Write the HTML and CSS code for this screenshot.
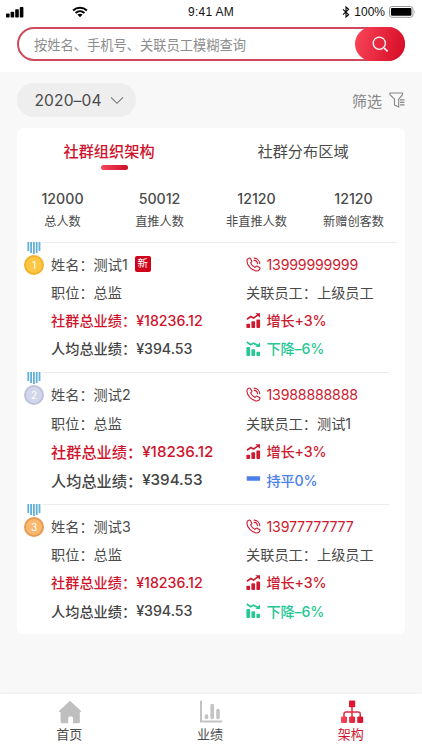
FILE: index.html
```
<!DOCTYPE html>
<html lang="zh-CN">
<head>
    <meta charset="UTF-8">
    <meta name="viewport" content="width=device-width, initial-scale=1.0">
    <title>社群组织架构</title>
    <link rel="stylesheet" href="styles.css">
</head>
<body>
    <!-- shared icons -->
    <svg class="sprite" width="0" height="0">
        <defs>
            <linearGradient id="redGrad" x1="0" y1="0" x2="1" y2="0">
                <stop offset="0" stop-color="#f5475c"/>
                <stop offset="1" stop-color="#d5112b"/>
            </linearGradient>
        </defs>
        <symbol id="phone" viewBox="0 0 15 15">
            <path d="M3.2 1.1 C2 1.5 .9 2.6 .9 4 C1.2 8.9 5.8 13.6 10.8 14 C12.3 14 13.4 13 13.9 11.8 C14.1 11.3 13.9 10.8 13.5 10.6 L11 9.2 C10.5 9 10.1 9.1 9.8 9.5 L9.1 10.4 C7.2 9.6 5.4 7.8 4.6 5.9 L5.4 5.2 C5.8 4.9 5.9 4.4 5.7 4 L4.4 1.6 C4.1 1.1 3.7 .9 3.2 1.1 Z" fill="none" stroke="currentColor" stroke-width="1.1"/>
            <path d="M8.1 1.1 C11.2 1.2 13.6 3.6 13.8 6.8 M8.1 3.4 C10 3.5 11.4 4.9 11.5 6.8" fill="none" stroke="currentColor" stroke-width="1.1" stroke-linecap="round"/>
        </symbol>
        <symbol id="up" viewBox="0 0 15 15">
            <path d="M1 6.2 L4.8 3.6 L7.6 5.1 L12.3 1.6" fill="none" stroke="currentColor" stroke-width="1.7"/>
            <path d="M9.4 .2 H14 V4.8 Z" fill="currentColor"/>
            <rect x=".4" y="10.7" width="3.7" height="4.2" rx=".9" fill="currentColor"/>
            <rect x="5.4" y="8.3" width="3.7" height="6.6" rx=".9" fill="currentColor"/>
            <rect x="10.4" y="6.5" width="3.7" height="8.4" rx=".9" fill="currentColor"/>
        </symbol>
        <symbol id="down" viewBox="0 0 15 15">
            <path d="M.8 1 L4.6 3.8 L7.5 2.3 L12.1 4.6" fill="none" stroke="currentColor" stroke-width="1.7"/>
            <path d="M14 1.6 V6 H9.5 Z" fill="currentColor"/>
            <rect x=".4" y="6" width="3.7" height="8.9" rx=".9" fill="currentColor"/>
            <rect x="5.4" y="8.2" width="3.7" height="6.7" rx=".9" fill="currentColor"/>
            <rect x="10.4" y="10.8" width="3.7" height="4.1" rx=".9" fill="currentColor"/>
        </symbol>
        <symbol id="flat" viewBox="0 0 15 15">
            <rect x=".7" y="4.2" width="13.4" height="4.5" rx=".4" fill="currentColor"/>
        </symbol>
        <symbol id="ribbon" viewBox="0 0 14 13">
            <path d="M1.3 0 V9 M4.1 0 V11 M6.9 0 V12 M9.7 0 V11 M12.5 0 V9" stroke="#62b0da" stroke-width="1.8"/>
        </symbol>
    </svg>

    <header class="header">
        <div class="status-bar">
            <div class="status-left">
                <svg width="18" height="12" viewBox="0 0 18 12">
                    <rect x="0" y="7.5" width="3.6" height="4" rx=".8"/>
                    <rect x="4.6" y="5.7" width="3.6" height="5.8" rx=".8"/>
                    <rect x="9.2" y="3.3" width="3.6" height="8.2" rx=".8"/>
                    <rect x="13.8" y="1" width="3.6" height="10.5" rx=".8"/>
                </svg>
                <svg class="wifi" width="16" height="12" viewBox="0 0 16 12">
                    <path d="M1.1 4.4 C5 .8 11 .8 14.9 4.4 M3.6 7 C6.2 4.7 9.8 4.7 12.4 7" fill="none" stroke="#000" stroke-width="2"/>
                    <path d="M5.4 8.6 Q8 6.7 10.6 8.6 L8 11.3 Z"/>
                </svg>
            </div>
            <span class="time">9:41 AM</span>
            <div class="status-right">
                <svg width="8" height="12" viewBox="0 0 8 12">
                    <path d="M1 3.3 L6.6 8.7 L4 11 V1 L6.6 3.3 L1 8.7" fill="none" stroke="#000" stroke-width="1.1"/>
                </svg>
                <span>100%</span>
                <svg width="27" height="12" viewBox="0 0 27 12">
                    <rect x=".5" y=".5" width="23.4" height="10.8" rx="2.4" fill="#fff" stroke="#999"/>
                    <rect x="2" y="2" width="20.4" height="7.8" rx="1"/>
                    <path d="M25 4 Q26.6 5.9 25 7.8 Z" fill="#999"/>
                </svg>
            </div>
        </div>
        <div class="search">
            <span class="placeholder">按姓名、手机号、关联员工模糊查询</span>
            <button class="search-btn">
                <svg width="17" height="17" viewBox="0 0 17 17">
                    <circle cx="7.3" cy="7.2" r="6.1" fill="none" stroke="#fff" stroke-width="1.3"/>
                    <path d="M12.2 12.2 L15.6 15.4" stroke="#fff" stroke-width="1.6"/>
                </svg>
            </button>
        </div>
    </header>

    <div class="toolbar">
        <div class="month">
            <span>2020–04</span>
            <svg width="14" height="9" viewBox="0 0 14 9"><path d="M1 1.3 L7 7.3 L13 1.3" fill="none" stroke="#777" stroke-width="1.1"/></svg>
        </div>
        <div class="filter">
            <span>筛选</span>
            <svg width="16" height="16" viewBox="0 0 16 16">
                <path d="M.9 1 H13.6 V2.6 L9.7 7.2 V15 L5.5 13 V7.2 L.9 2.6 Z" fill="none" stroke="#858585" stroke-width="1.1" stroke-linejoin="round"/>
                <path d="M11 7.9 H15.5 M11 10.4 H15.5 M11 12.9 H15.5" stroke="#858585" stroke-width="1.1"/>
            </svg>
        </div>
    </div>

    <main class="card">
        <div class="tabs">
            <div class="tab active">社群组织架构</div>
            <div class="tab">社群分布区域</div>
        </div>
        <div class="stats">
            <div class="stat"><strong>12000</strong><span>总人数</span></div>
            <div class="stat"><strong>50012</strong><span>直推人数</span></div>
            <div class="stat"><strong>12120</strong><span>非直推人数</span></div>
            <div class="stat"><strong>12120</strong><span>新赠创客数</span></div>
        </div>

        <section class="member first">
            <div class="medal gold">
                <svg width="14" height="13"><use href="#ribbon"/></svg>
                <span>1</span>
            </div>
            <div class="col">
                <p>姓名：测试1<span class="new">新</span></p>
                <p>职位：总监</p>
                <p class="total">社群总业绩：<b>¥18236.12</b></p>
                <p class="average">人均总业绩：<b>¥394.53</b></p>
            </div>
            <div class="col">
                <p class="phone"><svg width="15" height="15"><use href="#phone"/></svg>13999999999</p>
                <p>关联员工：上级员工</p>
                <p class="up"><svg width="15" height="15"><use href="#up"/></svg>增长+3%</p>
                <p class="down"><svg width="15" height="15"><use href="#down"/></svg>下降–6%</p>
            </div>
        </section>

        <section class="member second">
            <div class="medal silver">
                <svg width="14" height="13"><use href="#ribbon"/></svg>
                <span>2</span>
            </div>
            <div class="col">
                <p>姓名：测试2</p>
                <p>职位：总监</p>
                <p class="total">社群总业绩：<b>¥18236.12</b></p>
                <p class="average">人均总业绩：<b>¥394.53</b></p>
            </div>
            <div class="col">
                <p class="phone"><svg width="15" height="15"><use href="#phone"/></svg>13988888888</p>
                <p>关联员工：测试1</p>
                <p class="up"><svg width="15" height="15"><use href="#up"/></svg>增长+3%</p>
                <p class="flat"><svg width="15" height="15"><use href="#flat"/></svg>持平0%</p>
            </div>
        </section>

        <section class="member third">
            <div class="medal bronze">
                <svg width="14" height="13"><use href="#ribbon"/></svg>
                <span>3</span>
            </div>
            <div class="col">
                <p>姓名：测试3</p>
                <p>职位：总监</p>
                <p class="total">社群总业绩：<b>¥18236.12</b></p>
                <p class="average">人均总业绩：<b>¥394.53</b></p>
            </div>
            <div class="col">
                <p class="phone"><svg width="15" height="15"><use href="#phone"/></svg>13977777777</p>
                <p>关联员工：上级员工</p>
                <p class="up"><svg width="15" height="15"><use href="#up"/></svg>增长+3%</p>
                <p class="down"><svg width="15" height="15"><use href="#down"/></svg>下降–6%</p>
            </div>
        </section>
    </main>

    <nav class="bottom-nav">
        <a class="nav-item">
            <svg width="24" height="24" viewBox="0 0 24 24">
                <path d="M12 .8 L23 11 Q23.4 12 22.4 12 H21.8 V22 Q21.8 23.2 20.6 23.2 H15 V18 Q15 16.4 13.7 16.4 H11.5 Q10.2 16.4 10.2 18 V23.2 H4 Q2.6 23.2 2.6 22 V12 H1.6 Q.6 12 1 11 Z" fill="#bfbfbf"/>
            </svg>
            <span>首页</span>
        </a>
        <a class="nav-item">
            <svg width="24" height="24" viewBox="0 0 24 24">
                <path d="M2 1.5 V21.5 H22.4" fill="none" stroke="#c3c3c3" stroke-width="2" stroke-linecap="round"/>
                <path d="M7.5 16 V17.5 M13.2 5.5 V17.5 M19 10.5 V17.5" stroke="#c3c3c3" stroke-width="3.6" stroke-linecap="round"/>
            </svg>
            <span>业绩</span>
        </a>
        <a class="nav-item active">
            <svg width="24" height="24" viewBox="0 0 24 24">
                <rect x="9" y=".6" width="6.2" height="6.6" rx=".8" fill="#dc1733"/>
                <path d="M12 7 V17 M4 17 V14 Q4 12 6 12 H18.2 Q20.2 12 20.2 14 V17" fill="none" stroke="#dd2940" stroke-width="1.5"/>
                <path d="M1.8 16.5 H6.2 L7 17.3 V22.2 L6.2 23 H1.8 L1 22.2 V17.3 Z M9.9 16.5 H14.3 L15.1 17.3 V22.2 L14.3 23 H9.9 L9.1 22.2 V17.3 Z M18 16.5 H22.4 L23.2 17.3 V22.2 L22.4 23 H18 L17.2 22.2 V17.3 Z" fill="url(#redGrad)"/>
            </svg>
            <span>架构</span>
        </a>
    </nav>
</body>
</html>
```
FILE: styles.css
```
* {
    box-sizing: border-box;
}
body {
    font-family: Inter, "Noto Sans CJK SC", sans-serif;
    font-size: 14.2px;
    color: #4a4a4a;
    background: #f8f8f8;
    margin: 0;
    height: 750px;
    display: flex;
    flex-direction: column;
    overflow: hidden;
}
p {
    margin: 0;
}
svg {
    display: block;
    flex: none;
}
/* kept rendered so the gradient inside still works */
.sprite {
    position: absolute;
}
.header {
    background: #fff;
    height: 72px;
    flex: none;
}
.status-bar {
    display: grid;
    grid-template-columns: 1fr auto 1fr;
    align-items: center;
    height: 27px;
    padding: 0 6px 4px 6px;
    font-family: "Liberation Sans", Arial, sans-serif;
    font-size: 12px;
    color: #111;
}
.status-left {
    display: flex;
    align-items: center;
    gap: 48px;
}
.time {
    letter-spacing: 0.3px;
}
.status-right {
    display: flex;
    align-items: center;
    justify-content: flex-end;
    gap: 4px;
}
.search {
    display: flex;
    align-items: center;
    justify-content: space-between;
    width: 388px;
    height: 34px;
    margin-left: 17px;
    padding-left: 15px;
    border: 2px solid #cf4a5d;
    border-radius: 17px;
}
.placeholder {
    font-size: 13.25px;
    color: #8c8c8c;
}
.search-btn {
    display: flex;
    align-items: center;
    justify-content: center;
    width: 50px;
    height: 34px;
    margin-right: -2px;
    padding: 0;
    border: 0;
    border-radius: 17px;
    background: linear-gradient(105deg, #fa4659, #d40a24);
}
.toolbar {
    display: flex;
    align-items: center;
    justify-content: space-between;
    height: 56px;
    padding: 0 17px;
    flex: none;
}
.month {
    display: flex;
    align-items: center;
    gap: 8px;
    width: 119px;
    height: 34px;
    padding-left: 17.5px;
    border-radius: 17px;
    background: #eee;
    font-size: 15.6px;
    letter-spacing: 0.1px;
}
.filter {
    display: flex;
    align-items: center;
    gap: 7px;
    font-size: 15px;
    color: #858585;
}
.card {
    width: 388px;
    height: 506px;
    margin-left: 17px;
    flex: none;
    background: #fff;
    border-radius: 6px;
}
.tabs {
    display: flex;
    height: 56px;
    padding-top: 12px;
    font-size: 15.2px;
    line-height: 24px;
}
.tab {
    width: 194px;
    text-align: center;
    padding-right: 10px;
}
.tab.active {
    color: #d0132c;
    font-weight: 500;
}
.tab.active::after {
    content: "";
    display: block;
    width: 27px;
    height: 5px;
    margin: 1px auto 0;
    border-radius: 3px;
    background: linear-gradient(90deg, #f4485e, #d00d29);
    transform: translateX(5px);
}
.stats {
    display: grid;
    grid-template-columns: repeat(4, 97px);
    height: 58px;
    margin-left: -3px;
    padding-top: 5px;
}
.stat {
    display: flex;
    flex-direction: column;
    align-items: center;
}
.stat strong {
    font-size: 14.2px;
    font-weight: 500;
    line-height: 20px;
}
.stat span {
    font-size: 12.2px;
    line-height: 20px;
    margin-top: 3px;
}
.member {
    display: grid;
    grid-template-columns: 195px 1fr;
    position: relative;
    height: 130px;
    margin: 0 8px 0 26px;
    padding: 7px 0 0 8px;
    border-top: 1px solid #ececec;
    --line: 28px;
}
.member p {
    display: flex;
    align-items: center;
    height: var(--line);
    white-space: nowrap;
}
.second {
    height: 132px;
    margin-right: 16px;
    --line: 28.5px;
}
.third {
    margin-right: 16px;
    --line: 28.2px;
}
.member b {
    font-weight: inherit;
}
.member .total,
.member .average {
    font-weight: 500;
}
.second .total,
.second .average {
    font-size: 15.2px;
}
.member .total {
    color: #d0132c;
}
.average {
    color: #444;
}
.phone,
.up,
.down,
.flat {
    gap: 5.5px;
}
.phone,
.up {
    color: #cc1b30;
}
.phone {
    letter-spacing: -0.2px;
}
.up {
    font-weight: 500;
}
.down {
    color: #25c795;
    font-weight: 500;
}
.flat {
    color: #4a80e8;
    font-weight: 500;
}
.up,
.down,
.flat {
    letter-spacing: -0.15px;
}
.new {
    width: 16px;
    height: 16px;
    margin-left: 7px;
    border-radius: 2px;
    background: #d0021b;
    color: #fff;
    font-size: 10.5px;
    line-height: 16px;
    text-align: center;
}
.medal {
    position: absolute;
    left: -19px;
    top: -1px;
    width: 20px;
    display: flex;
    flex-direction: column;
    align-items: center;
}
.medal span {
    width: 20px;
    height: 20px;
    border: 2px solid;
    border-radius: 50%;
    color: #fff;
    font-size: 10px;
    line-height: 16px;
    text-align: center;
}
.gold span {
    background: #fbc742;
    border-color: #f4b12c;
}
.silver span {
    background: #d3d5ea;
    border-color: #bfc2dd;
}
.bronze span {
    background: #f8b870;
    border-color: #e59b51;
}
.bottom-nav {
    display: grid;
    grid-template-columns: repeat(3, 1fr);
    height: 56px;
    margin-top: auto;
    flex: none;
    background: #fff;
    box-shadow: 0 -1px 3px rgba(0, 0, 0, 0.04);
}
.nav-item {
    display: flex;
    flex-direction: column;
    align-items: center;
    padding-top: 6px;
    font-size: 13px;
    line-height: 20px;
}
.nav-item span {
    margin-right: 2px;
}
.nav-item.active {
    color: #d0132c;
}
```
